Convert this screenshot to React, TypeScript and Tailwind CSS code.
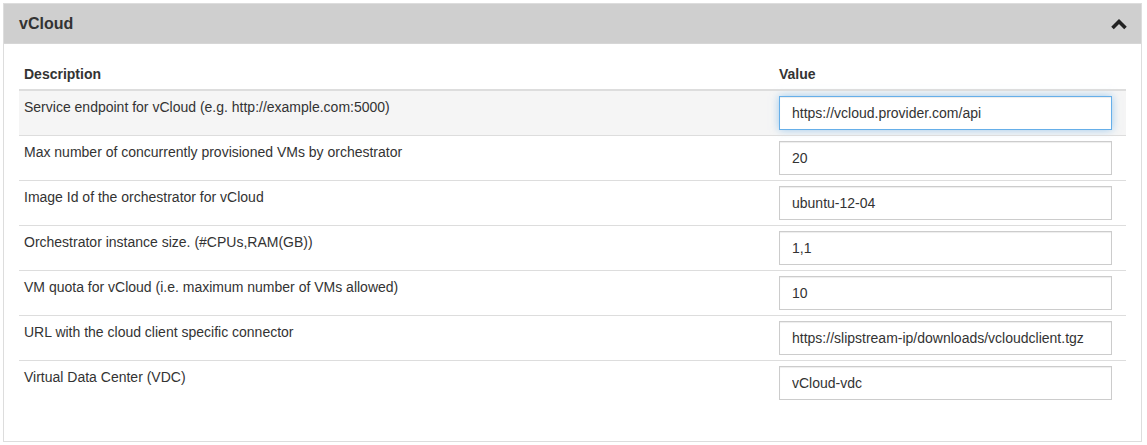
import React from "react";

const rows = [
  { label: "Service endpoint for vCloud (e.g. http://example.com:5000)", value: "https://vcloud.provider.com/api", focused: true },
  { label: "Max number of concurrently provisioned VMs by orchestrator", value: "20" },
  { label: "Image Id of the orchestrator for vCloud", value: "ubuntu-12-04" },
  { label: "Orchestrator instance size. (#CPUs,RAM(GB))", value: "1,1" },
  { label: "VM quota for vCloud (i.e. maximum number of VMs allowed)", value: "10" },
  { label: "URL with the cloud client specific connector", value: "https://slipstream-ip/downloads/vcloudclient.tgz" },
  { label: "Virtual Data Center (VDC)", value: "vCloud-vdc" },
];

function ChevronUp() {
  return (
    <svg width="16" height="12" viewBox="0 0 16 12" className="block">
      <path d="M1.5 10 L8 3.5 L14.5 10" fill="none" stroke="#222" strokeWidth="3.6" strokeLinecap="butt" strokeLinejoin="miter" />
    </svg>
  );
}

export default function App() {
  return (
    <div className="w-[1147px] h-[445px] bg-white pt-[3px] pl-[3px] font-['Liberation_Sans',Arial,sans-serif] text-[#333]">
      <div className="w-[1139px] border border-[#dddddd]">
        {/* panel heading */}
        <div className="h-[40px] bg-[#cfcfcf] border-b border-[#d6d6d6] flex items-center justify-between pl-[15px] pr-[14px]">
          <h3 className="text-[16px] font-bold leading-none">vCloud</h3>
          <ChevronUp />
        </div>

        {/* panel body */}
        <div className="px-[15px] pt-[15px] pb-[16px]">
          <table className="w-full border-collapse text-[14px] leading-[20px] mb-[20px]">
            <thead>
              <tr className="border-b-2 border-[#dddddd]">
                <th className="text-left font-bold px-[5px] py-[5px] align-bottom">Description</th>
                <th className="text-left font-bold px-[5px] py-[5px] align-bottom w-[351px]">Value</th>
              </tr>
            </thead>
            <tbody>
              {rows.map((r, i) => (
                <tr key={i} className={(i > 0 ? "border-t border-[#dddddd] " : "") + (i === 0 ? "bg-[#f5f5f5]" : "")}>
                  <td className="align-top px-[5px] pt-[6px] pb-[5px]">{r.label}</td>
                  <td className="align-top pl-[5px] pr-[14px] py-[5px]">
                    <input
                      readOnly
                      value={r.value}
                      className={
                        r.focused
                          ? "block w-[333px] h-[34px] px-[12px] bg-white border border-[#66afe9] text-[14px] text-[#333] outline-none shadow-[inset_0_1px_1px_rgba(0,0,0,0.075),0_0_8px_rgba(102,175,233,0.6)] font-['Liberation_Sans',Arial,sans-serif]"
                          : "block w-[333px] h-[34px] px-[12px] bg-white border border-[#cccccc] text-[14px] text-[#333] outline-none shadow-[inset_0_1px_1px_rgba(0,0,0,0.075)] font-['Liberation_Sans',Arial,sans-serif]"
                      }
                    />
                  </td>
                </tr>
              ))}
            </tbody>
          </table>
        </div>
      </div>
    </div>
  );
}
